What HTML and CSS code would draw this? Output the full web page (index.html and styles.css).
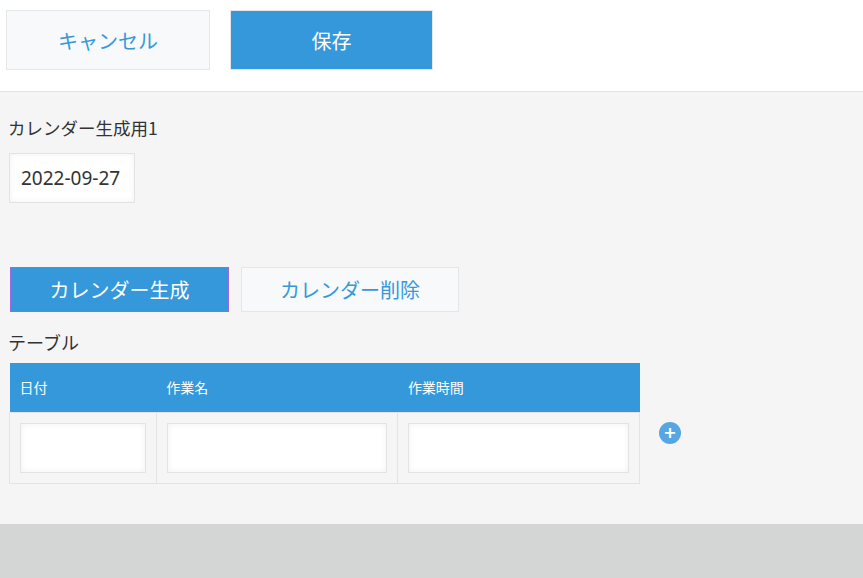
FILE: index.html
```html
<!DOCTYPE html>
<html>
	<head>
		<meta charset="UTF-8">
		<title>レコード編集</title>
		<link rel="stylesheet" href="styles.css">
	</head>
	<body>
		<div class="toolbar">
			<button class="btn btn-cancel">キャンセル</button>
			<button class="btn btn-save">保存</button>
		</div>
		<div class="record">
			<div class="field">
				<div class="field-label">カレンダー生成用1</div>
				<div class="date-box">2022-09-27</div>
			</div>
			<div class="actions">
				<button class="act act-make">カレンダー生成</button>
				<button class="act act-del">カレンダー削除</button>
			</div>
			<div class="field-label table-label">テーブル</div>
			<div class="table-wrap">
				<table class="sub">
					<thead>
						<tr>
							<th class="c1">日付</th>
							<th class="c2">作業名</th>
							<th class="c3">作業時間</th>
						</tr>
					</thead>
					<tbody>
						<tr>
							<td><div class="cell-input"></div></td>
							<td><div class="cell-input"></div></td>
							<td><div class="cell-input"></div></td>
						</tr>
					</tbody>
				</table>
				<span class="add-row">+</span>
			</div>
		</div>
	</body>
</html>
```

FILE: styles.css
```css
*{
	margin: 0;
	padding: 0;
	box-sizing: border-box;
}
body{
	background-color: #d4d6d5;
	font-family: "Noto Sans CJK JP", "Noto Sans", sans-serif;
	color: #333;
}
button{
	font-family: inherit;
}
.toolbar{
	height: 92px;
	background-color: #fff;
	border-bottom: 1px solid #e3e3e3;
	padding: 10px 0 0 6px;
	display: flex;
	gap: 20px;
}
.btn{
	width: 204px;
	height: 60px;
	font-size: 20px;
	border: 1px solid #e3e7e8;
}
.btn-cancel{
	background-color: #f7f9fa;
	color: #3498db;
}
.btn-save{
	width: 203px;
	background-color: #3498db;
	color: #fff;
}
.record{
	background-color: #f5f5f5;
	padding: 26px 0 40px 0;
}
.field{
	padding-left: 9px;
}
.field-label{
	font-size: 17.5px;
	line-height: 20px;
	margin-left: -1px;
}
.date-box{
	margin-top: 15px;
	width: 126px;
	height: 50px;
	background-color: #fff;
	border: 1px solid #e3e3e3;
	box-shadow: inset 0 0 6px rgba(0,0,0,0.06);
	font-family: "Noto Sans", sans-serif;
	font-size: 19px;
	line-height: 48px;
	padding-left: 11px;
	color: #333;
}
.actions{
	margin-top: 64px;
	padding-left: 10px;
	display: flex;
	gap: 12px;
}
.act{
	width: 219px;
	height: 45px;
	font-size: 20px;
}
.act-make{
	background-color: #3498db;
	color: #fff;
	border: 1px solid #a066e0;
}
.act-del{
	width: 218px;
	background-color: #f7f9fa;
	color: #3498db;
	border: 1px solid #e3e7e8;
}
.table-label{
	margin-top: 20px;
	margin-left: 8px;
	font-size: 18px;
}
.table-wrap{
	margin-top: 11px;
	padding-left: 9px;
	display: flex;
	align-items: flex-start;
}
.sub{
	border-collapse: collapse;
	width: 631px;
}
.sub th{
	background-color: #3498db;
	color: #fff;
	font-size: 14px;
	font-weight: normal;
	text-align: left;
	height: 49px;
	padding: 0 10px;
}
.sub th.c1{
	width: 147px;
}
.sub th.c2{
	width: 242px;
}
.sub th.c3{
	width: 242px;
}
.sub td{
	border: 1px solid #e3e3e3;
	padding: 10px;
	height: 71px;
}
.cell-input{
	height: 50px;
	background-color: #fff;
	border: 1px solid #e3e3e3;
	box-shadow: inset 0 0 6px rgba(0,0,0,0.06);
}
.add-row{
	margin: 59px 0 0 19px;
	width: 22px;
	height: 22px;
	border-radius: 50%;
	background-color: #55a6e3;
	color: #fff;
	font-family: "DejaVu Sans", sans-serif;
	font-size: 16px;
	font-weight: bold;
	line-height: 22px;
	text-align: center;
}
```
